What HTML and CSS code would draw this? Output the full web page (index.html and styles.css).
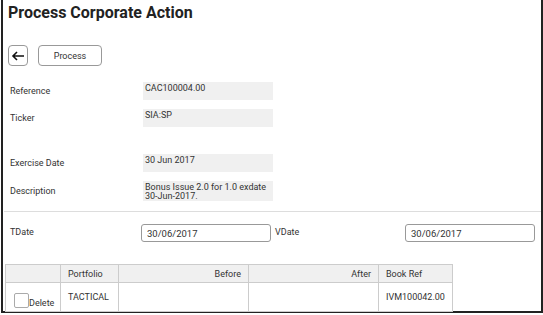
FILE: index.html
```html
<!DOCTYPE html>
<html lang="en">
<head>
  <meta charset="UTF-8">
  <title>Process Corporate Action</title>
  <link rel="stylesheet" href="styles.css">
</head>
<body>

<div class="frame">
  <h1>Process Corporate Action</h1>

  <div class="toolbar">
    <button class="back">
      <svg width="14" height="10" viewBox="0 0 14 10"><path d="M13 5H2M6 1L2 5l4 4" fill="none" stroke="#111" stroke-width="1.6"/></svg>
    </button>
    <button class="action">Process</button>
  </div>

  <div class="fields">
    <div class="label">Reference</div>
    <div class="value">CAC100004.00</div>
    <div class="label">Ticker</div>
    <div class="value">SIA:SP</div>
    <div class="spacer"></div>
    <div class="label">Exercise Date</div>
    <div class="value">30 Jun 2017</div>
    <div class="label">Description</div>
    <div class="value">Bonus Issue 2.0 for 1.0 exdate 30-Jun-2017.</div>
  </div>

  <hr>

  <div class="dates">
    <label>TDate</label>
    <input type="text" value="30/06/2017">
    <label class="second">VDate</label>
    <input type="text" value="30/06/2017">
  </div>

  <table>
    <colgroup>
      <col style="width: 55px">
      <col style="width: 58px">
      <col style="width: 130px">
      <col style="width: 130px">
      <col style="width: 74px">
    </colgroup>
    <tr>
      <th></th>
      <th>Portfolio</th>
      <th class="num">Before</th>
      <th class="num">After</th>
      <th>Book Ref</th>
    </tr>
    <tr>
      <td class="check"><span class="box"></span>Delete</td>
      <td>TACTICAL</td>
      <td></td>
      <td></td>
      <td>IVM100042.00</td>
    </tr>
  </table>
</div>

</body>
</html>
```

FILE: styles.css
```css
body {
  margin: 0;
  background-color: #ffffff;
  color: #333;
  font-family: Roboto, "Liberation Sans", sans-serif;
  font-size: 9px;
}

.frame {
  width: 538px;
  height: 311px;
  border-left: 2px solid #222;
  border-right: 2px solid #222;
  border-bottom: 2px solid #222;
  margin-left: 1px;
}

h1 {
  margin: 0;
  padding: 3px 0 0 5px;
  font-size: 16px;
  line-height: 19px;
  font-weight: bold;
  color: #222;
  box-sizing: border-box;
  height: 22px;
}

.toolbar {
  display: flex;
  gap: 10px;
  padding: 23px 0 0 5px;
}

button {
  height: 21px;
  border: 1px solid #999;
  border-radius: 4px;
  background-color: #fff;
  font-family: Roboto, "Liberation Sans", sans-serif;
  font-size: 9px;
  color: #333;
  padding: 0;
}

button.back {
  width: 20px;
  display: flex;
  align-items: center;
  justify-content: center;
}

button.action {
  width: 64px;
}

.fields {
  display: grid;
  grid-template-columns: 133px 130px;
  row-gap: 9px;
  padding: 16px 0 0 7px;
}

.label {
  display: flex;
  align-items: center;
}

.value {
  background-color: #f0f0f0;
  min-height: 18px;
  padding: 2px 2px 0;
  box-sizing: border-box;
  line-height: 9px;
}

.spacer {
  grid-column: span 2;
  height: 0;
  margin-bottom: 9px;
}

hr {
  border: none;
  border-top: 1px solid #ddd;
  margin: 10px 0 0 1px;
}

.dates {
  display: grid;
  grid-template-columns: 131px 130px 134px 130px;
  padding: 12px 0 0 7px;
  align-items: center;
}

.dates label {
  align-self: start;
  padding-top: 3px;
}

.dates label.second {
  padding-left: 4px;
}

.dates input {
  height: 18px;
  box-sizing: border-box;
  border: 1px solid #999;
  border-radius: 3px;
  padding: 0 5px;
  font-family: Roboto, "Liberation Sans", sans-serif;
  font-size: 9.5px;
  color: #333;
  width: 130px;
}

table {
  border-collapse: collapse;
  table-layout: fixed;
  margin: 22px 0 0 2px;
  width: 447px;
}

th, td {
  border: 1px solid #ccc;
  font-weight: normal;
  text-align: left;
  padding: 0 7px;
  color: #333;
}

th {
  background-color: #f0f0f0;
  height: 17px;
}

td {
  height: 25px;
}

.num {
  text-align: right;
}

.check {
  padding: 0 0 0 8px;
  vertical-align: bottom;
  padding-bottom: 3px;
}

.box {
  display: inline-block;
  width: 13px;
  height: 13px;
  border: 1px solid #aaa;
  border-radius: 2px;
  vertical-align: -2px;
}
```
